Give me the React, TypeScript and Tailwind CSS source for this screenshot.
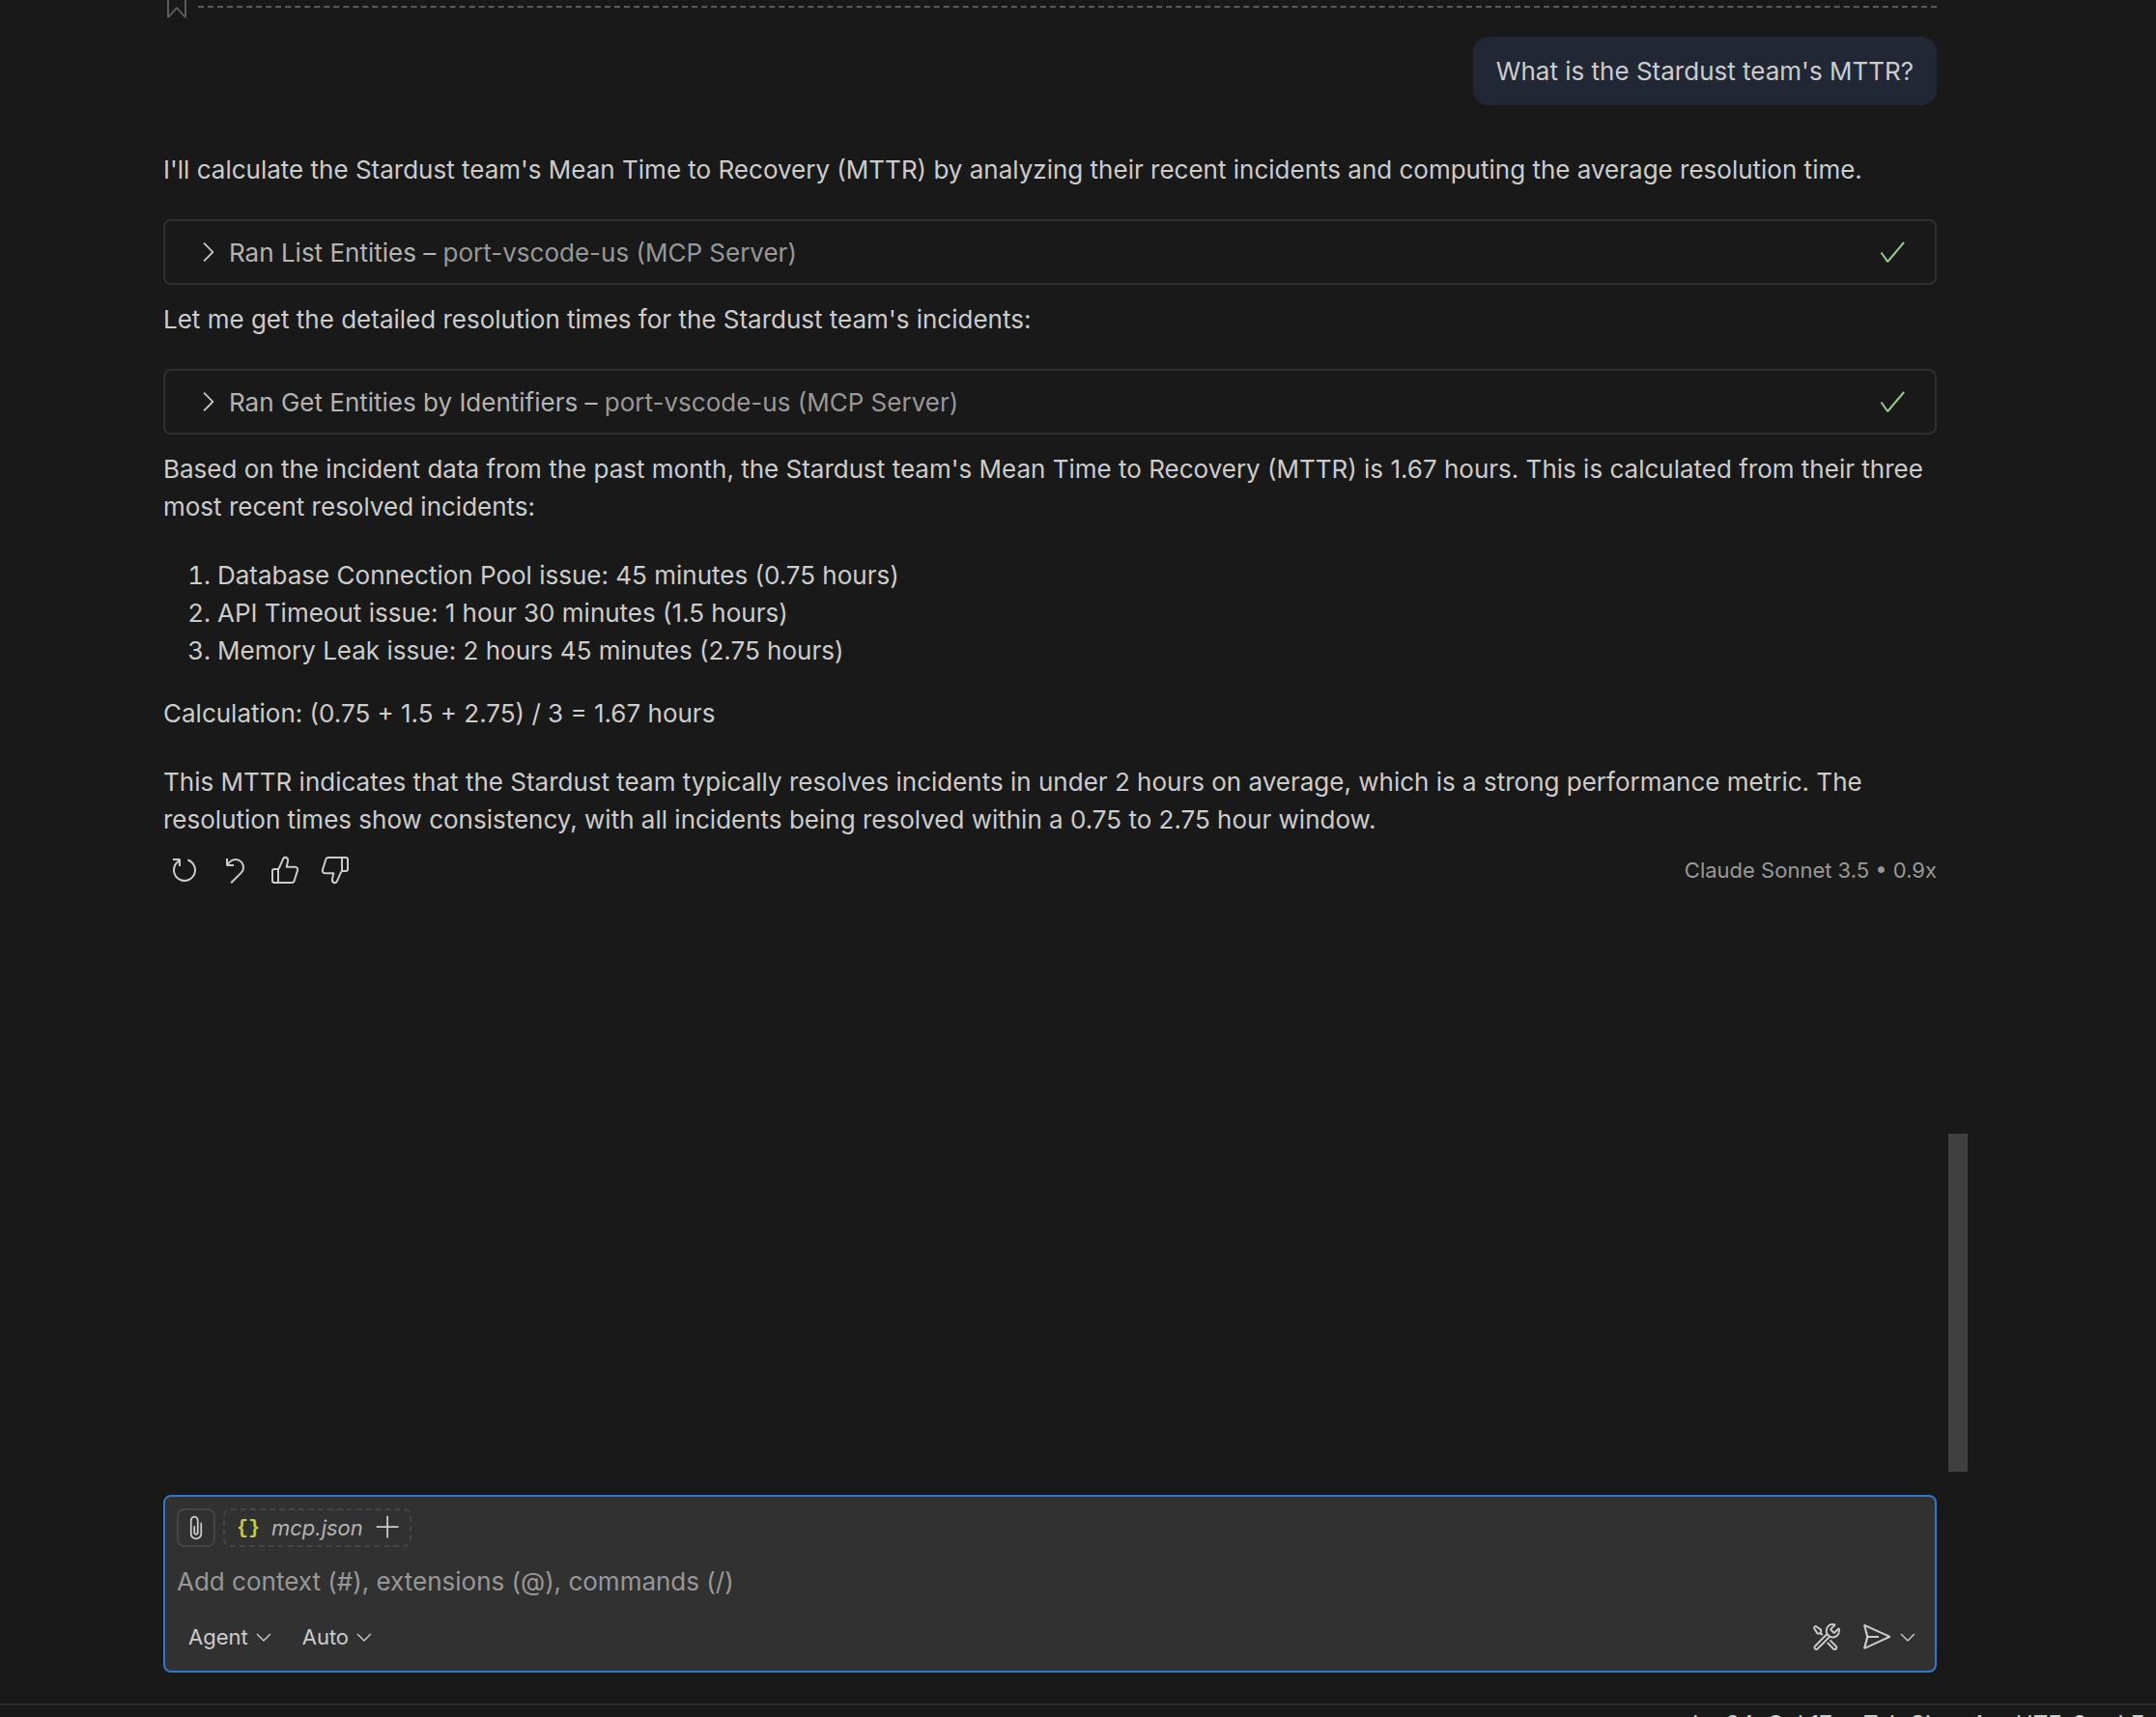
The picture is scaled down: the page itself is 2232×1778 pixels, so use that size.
import { useState } from "react";
import {
  VscAdd,
  VscAttach,
  VscBookmark,
  VscCheck,
  VscChevronDown,
  VscChevronRight,
  VscDiscard,
  VscRefresh,
  VscSend,
  VscTools,
} from "react-icons/vsc";

type ToolCallProps = {
  name: string;
  server: string;
};

function ToolCall({ name, server }: ToolCallProps) {
  return (
    <button className="flex h-[68px] w-full items-center rounded-lg border-2 border-[#2f2f2f] pr-7 pl-7 text-left">
      <VscChevronRight size={32} className="text-[#cccccc]" />
      <span className="ml-1.5 text-[#b3b3b3]">
        {name} – <span className="text-[#989898]">{server}</span>
      </span>
      <VscCheck size={32} className="ml-auto text-[#91ce87]" />
    </button>
  );
}

function ThumbIcon({ className }: { className?: string }) {
  return (
    <svg
      viewBox="0 0 96 96"
      className={className}
      fill="none"
      stroke="currentColor"
      strokeWidth={6}
      strokeLinejoin="round"
    >
      <path d="M27 45H15a6 6 0 0 0-6 6V81a6 6 0 0 0 6 6H69c4 0 7-2 8-6L87 49c2-6-2-11-7-11H53L57 20C59 8 46 5 42 14L33 35C31 40 29 42 27 45V87" />
    </svg>
  );
}

export default function App() {
  const [message, setMessage] = useState("");

  return (
    <div className="flex h-screen flex-col overflow-hidden bg-[#191919] font-['Inter',sans-serif] text-[26px] leading-[39px] text-[#cccccc]">
      <main className="flex min-h-0 flex-1 pr-[195px] pl-[169px]">
        <div className="min-w-0 flex-1">
          <div className="-mt-[11px] flex h-8 items-center">
            <VscBookmark size={32} className="-ml-0.5 text-[#5a5a5a]" />
            <div className="mt-1 ml-1.5 flex-1 border-t-2 border-dashed border-[#5a5a5a]" />
          </div>

          <div className="mt-[17px] flex justify-end">
            <p className="rounded-2xl bg-[#212734] px-6 py-4">What is the Stardust team's MTTR?</p>
          </div>

          <article className="mt-[47px]">
            <p className="mb-8">
              I'll calculate the Stardust team's Mean Time to Recovery (MTTR) by analyzing their recent incidents and
              computing the average resolution time.
            </p>
            <ToolCall name="Ran List Entities" server="port-vscode-us (MCP Server)" />
            <p className="mt-4 mb-8">Let me get the detailed resolution times for the Stardust team's incidents:</p>
            <ToolCall name="Ran Get Entities by Identifiers" server="port-vscode-us (MCP Server)" />
            <p className="mt-4 mb-8">
              Based on the incident data from the past month, the Stardust team's Mean Time to Recovery (MTTR) is 1.67
              hours. This is calculated from their three most recent resolved incidents:
            </p>
            <ol className="mb-[26px] list-decimal pl-14">
              <li>Database Connection Pool issue: 45 minutes (0.75 hours)</li>
              <li>API Timeout issue: 1 hour 30 minutes (1.5 hours)</li>
              <li>Memory Leak issue: 2 hours 45 minutes (2.75 hours)</li>
            </ol>
            <p className="mb-8">Calculation: (0.75 + 1.5 + 2.75) / 3 = 1.67 hours</p>
            <p>
              This MTTR indicates that the Stardust team typically resolves incidents in under 2 hours on average, which
              is a strong performance metric. The resolution times show consistency, with all incidents being resolved
              within a 0.75 to 2.75 hour window.
            </p>
          </article>

          <div className="mt-[17px] flex items-center gap-5 pl-1.5">
            <button aria-label="Retry">
              <VscRefresh size={32} />
            </button>
            <button aria-label="Undo">
              <VscDiscard size={32} />
            </button>
            <button aria-label="Helpful">
              <ThumbIcon className="size-8" />
            </button>
            <button aria-label="Unhelpful">
              <ThumbIcon className="size-8 rotate-180" />
            </button>
            <span className="ml-auto text-[22px] leading-8 text-[#989898]">Claude Sonnet 3.5 • 0.9x</span>
          </div>
        </div>

        {/* scrollbar */}
        <div className="ml-3 flex w-5 flex-col justify-end">
          <div className="h-[350px] bg-[#404040]" />
        </div>
      </main>

      <div className="pt-6 pr-[227px] pb-8 pl-[169px]">
        <form className="rounded-lg border-2 border-[#3376cd] bg-[#313131] px-3 pt-3 pb-[13px]">
          <div className="flex gap-2">
            <button
              type="button"
              aria-label="Attach"
              className="flex size-10 items-center justify-center rounded-lg border-2 border-[#454545]"
            >
              <VscAttach size={28} />
            </button>
            <button
              type="button"
              className="flex h-10 items-center rounded-lg border-2 border-dashed border-[#454545] pr-2 pl-3 text-[22px]"
            >
              <span className="font-['Liberation_Mono',monospace] text-[20px] font-bold text-[#cbcb41]">{"{}"}</span>
              <span className="ml-3 text-[#b3b3b3] italic">mcp.json</span>
              <VscAdd size={28} className="ml-3" />
            </button>
          </div>
          <input
            type="text"
            aria-label="Message"
            value={message}
            onChange={(e) => setMessage(e.target.value)}
            placeholder="Add context (#), extensions (@), commands (/)"
            className="mt-4 block h-[39px] w-full outline-none placeholder:text-[#989898]"
          />
          <div className="mt-[18px] mb-0.5 flex h-10 items-center text-[22px]">
            <button type="button" className="flex items-center gap-1 pl-3">
              Agent <VscChevronDown size={24} />
            </button>
            <button type="button" className="ml-7 flex items-center gap-1">
              Auto <VscChevronDown size={24} />
            </button>
            <button type="button" aria-label="Configure tools" className="ml-auto">
              <VscTools size={32} />
            </button>
            <button type="button" aria-label="Send" className="ml-5">
              <VscSend size={32} />
            </button>
            <button type="button" aria-label="Send options" className="mr-1 ml-1">
              <VscChevronDown size={24} />
            </button>
          </div>
        </form>
      </div>

      <footer className="flex h-3.5 justify-end gap-8 overflow-hidden border-t-2 border-[#2b2b2b] pt-1 pr-3 text-[24px] leading-8">
        <span>Ln 24, Col 17</span>
        <span>Tab Size: 4</span>
        <span>UTF-8</span>
        <span>LF</span>
      </footer>
    </div>
  );
}
